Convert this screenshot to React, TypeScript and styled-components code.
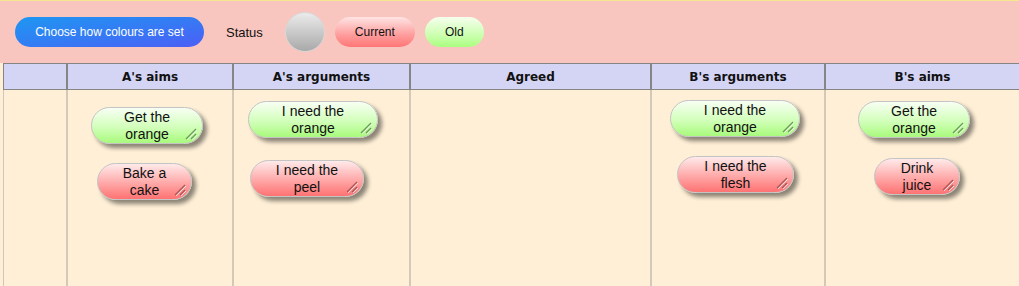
import React from "react";
import styled, { createGlobalStyle } from "styled-components";

const GlobalStyle = createGlobalStyle`
  html, body { margin: 0; padding: 0; height: 100%; }
  body { background: #feefd6; font-family: "Liberation Sans", Arial, sans-serif; }
  #root { height: 100%; }
  * { box-sizing: border-box; }
`;

const Page = styled.div`
  display: flex;
  flex-direction: column;
  height: 100vh;
  overflow: hidden;
`;

const TopBar = styled.div`
  height: 63px;
  flex: none;
  background: #f8c6bf;
  border-top: 1px solid #f6e68e;
  display: flex;
  align-items: center;
  padding-left: 15px;
`;

const ModeButton = styled.button`
  width: 189px;
  height: 30px;
  border: none;
  border-radius: 15px;
  background: linear-gradient(170deg, #1e97f2 0%, #3679f4 55%, #4d5ef6 100%);
  color: #fff;
  font-family: "Liberation Sans", Arial, sans-serif;
  font-size: 12px;
  padding: 0;
  margin-right: 22px;
`;

const StatusLabel = styled.span`
  font-size: 13px;
  color: #111;
  margin-right: 22px;
`;

const StatusDot = styled.div`
  width: 40px;
  height: 40px;
  border-radius: 50%;
  background: linear-gradient(to bottom, #ebebeb, #a9a9a9);
  border: 1px solid #d8d8d8;
  margin-right: 10px;
`;

const Legend = styled.div<{ $w: number; $tone: "red" | "green" }>`
  width: ${(p) => p.$w}px;
  height: 30px;
  border-radius: 15px;
  display: flex;
  align-items: center;
  justify-content: center;
  font-size: 12px;
  color: #111;
  margin-right: 10px;
  background: ${(p) =>
    p.$tone === "red"
      ? "linear-gradient(to bottom, #ffe4e4 0%, #ff9c9c 60%, #ff7676 100%)"
      : "linear-gradient(to bottom, #f6ffee 0%, #ccffb0 60%, #aaff80 100%)"};
`;

const cols = "64px 166px 177px 241px 174px 1fr";

const HeaderRow = styled.div`
  flex: none;
  display: grid;
  grid-template-columns: ${cols};
  height: 27px;
  margin-left: 3px;
  background: #d4d4f4;
  border-top: 1px solid #858585;
  border-bottom: 1px solid #858585;
  border-left: 1px solid #858585;
`;

const HeaderCell = styled.div<{ $last?: boolean }>`
  display: flex;
  align-items: center;
  justify-content: center;
  border-right: ${(p) => (p.$last ? "none" : "2px solid #858585")};
  font-family: "DejaVu Sans", Verdana, sans-serif;
  font-weight: bold;
  font-size: 12px;
  color: #111;
`;

const Board = styled.div`
  flex: 1;
  display: grid;
  grid-template-columns: ${cols};
  margin-left: 3px;
  border-left: 1px solid #cfc7b6;
  background: #feefd6;
`;

const Column = styled.div<{ $last?: boolean }>`
  display: flex;
  flex-direction: column;
  align-items: flex-start;
  border-right: ${(p) => (p.$last ? "none" : "2px solid #d2c9b8")};
`;

const Note = styled.div<{ $tone: "red" | "green"; $w: number; $x: number; $y: number }>`
  position: relative;
  width: ${(p) => p.$w}px;
  height: 37px;
  margin-left: ${(p) => p.$x}px;
  margin-top: ${(p) => p.$y}px;
  border-radius: 19px;
  border: 1px solid #c4c4c4;
  box-shadow: 4px 4px 4px rgba(0, 0, 0, 0.45);
  display: flex;
  align-items: center;
  justify-content: center;
  text-align: center;
  font-family: "Liberation Sans", Arial, sans-serif;
  font-size: 14px;
  line-height: 17px;
  color: #111;
  background: ${(p) =>
    p.$tone === "red"
      ? "linear-gradient(to bottom, #ffeaea 0%, #ffa8a8 55%, #ff7272 100%)"
      : "linear-gradient(to bottom, #f8fff4 0%, #d2ffba 55%, #a8fa7c 100%)"};
`;

const Grip = styled.svg`
  position: absolute;
  right: 5px;
  bottom: 3px;
  width: 12px;
  height: 12px;
`;

type Tone = "red" | "green";
type NoteData = { text: [string, string]; tone: Tone; w: number; x: number; y: number };

function ResizeGrip({ tone }: { tone: Tone }) {
  const dark = tone === "red" ? "#a85858" : "#6c9a5a";
  return (
    <Grip viewBox="0 0 12 12">
      <line x1="11" y1="1" x2="1" y2="11" stroke={dark} strokeWidth="1.2" />
      <line x1="12" y1="2" x2="2" y2="12" stroke="#ffffff" strokeOpacity="0.7" strokeWidth="1" />
      <line x1="11" y1="6" x2="6" y2="11" stroke={dark} strokeWidth="1.2" />
      <line x1="12" y1="7" x2="7" y2="12" stroke="#ffffff" strokeOpacity="0.7" strokeWidth="1" />
    </Grip>
  );
}

const columns: { title: string; notes: NoteData[] }[] = [
  { title: "", notes: [] },
  {
    title: "A's aims",
    notes: [
      { text: ["Get the", "orange"], tone: "green", w: 112, x: 23, y: 17 },
      { text: ["Bake a", "cake"], tone: "red", w: 95, x: 29, y: 19 },
    ],
  },
  {
    title: "A's arguments",
    notes: [
      { text: ["I need the", "orange"], tone: "green", w: 130, x: 14, y: 11 },
      { text: ["I need the", "peel"], tone: "red", w: 114, x: 16, y: 22 },
    ],
  },
  { title: "Agreed", notes: [] },
  {
    title: "B's arguments",
    notes: [
      { text: ["I need the", "orange"], tone: "green", w: 130, x: 18, y: 10 },
      { text: ["I need the", "flesh"], tone: "red", w: 117, x: 25, y: 19 },
    ],
  },
  {
    title: "B's aims",
    notes: [
      { text: ["Get the", "orange"], tone: "green", w: 112, x: 32, y: 11 },
      { text: ["Drink", "juice"], tone: "red", w: 86, x: 48, y: 20 },
    ],
  },
];

export default function App() {
  return (
    <Page>
      <GlobalStyle />
      <TopBar>
        <ModeButton>Choose how colours are set</ModeButton>
        <StatusLabel>Status</StatusLabel>
        <StatusDot />
        <Legend $w={80} $tone="red">Current</Legend>
        <Legend $w={59} $tone="green">Old</Legend>
      </TopBar>
      <HeaderRow>
        {columns.map((c, i) => (
          <HeaderCell key={i} $last={i === columns.length - 1}>
            {c.title}
          </HeaderCell>
        ))}
      </HeaderRow>
      <Board>
        {columns.map((c, i) => (
          <Column key={i} $last={i === columns.length - 1}>
            {c.notes.map((n, j) => (
              <Note key={j} $tone={n.tone} $w={n.w} $x={n.x} $y={n.y}>
                <span>
                  {n.text[0]}
                  <br />
                  {n.text[1]}
                </span>
                <ResizeGrip tone={n.tone} />
              </Note>
            ))}
          </Column>
        ))}
      </Board>
    </Page>
  );
}
